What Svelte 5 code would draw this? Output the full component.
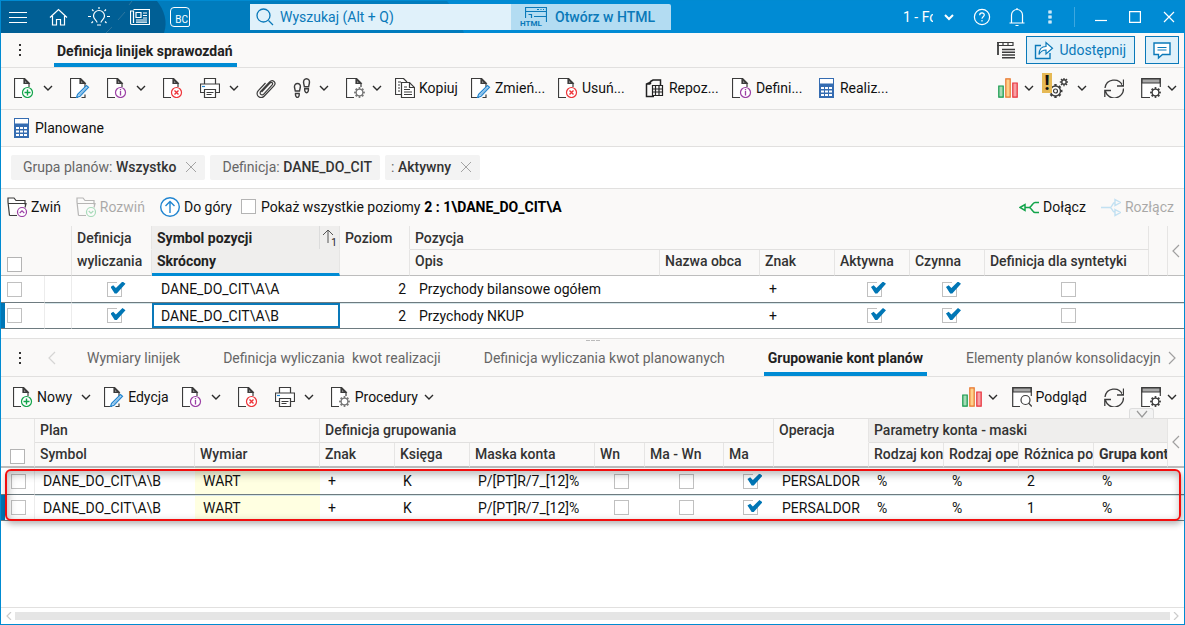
<script>
	let showAll = $state(false);
	let search = $state('');

	const toolbar = [
		{ icon: 'doc-new', title: 'Nowy', menu: true },
		{ icon: 'doc-edit', title: 'Edycja' },
		{ icon: 'doc-info', title: 'Informacje', menu: true },
		{ icon: 'doc-delete', title: 'Usuń' },
		{ icon: 'printer', title: 'Drukuj', menu: true },
		{ icon: 'clip', title: 'Załączniki' },
		{ icon: 'steps', title: 'Historia', menu: true, close: true },
		{ icon: 'doc-gear', title: 'Procedury', menu: true, tight: true },
		{ icon: 'copy', label: 'Kopiuj' },
		{ icon: 'doc-edit', label: 'Zmień...', wide: true },
		{ icon: 'doc-delete', label: 'Usuń...', wide: true },
		{ icon: 'repo', label: 'Repoz...', wide: true },
		{ icon: 'doc-info', label: 'Defini...', wide: true },
		{ icon: 'calc', label: 'Realiz...', wide: true }
	];

	const toolbarRight = [
		{ icon: 'chart', title: 'Wykresy', menu: true, close: true },
		{ icon: 'gears', title: 'Ustawienia', menu: true, badge: true },
		{ icon: 'refresh', title: 'Odśwież' },
		{ icon: 'window-gear', title: 'Widok', menu: true, close: true }
	];

	const detailToolbar = [
		{ icon: 'doc-new', label: 'Nowy', menu: true },
		{ icon: 'doc-edit', label: 'Edycja' },
		{ icon: 'doc-info', title: 'Informacje', menu: true },
		{ icon: 'doc-delete', title: 'Usuń' },
		{ icon: 'printer', title: 'Drukuj', menu: true },
		{ icon: 'doc-gear', label: 'Procedury', menu: true, close: true }
	];

	const detailToolbarRight = [
		{ icon: 'chart', title: 'Wykresy', menu: true, close: true },
		{ icon: 'preview', label: 'Podgląd' },
		{ icon: 'refresh', title: 'Odśwież' },
		{ icon: 'window-gear', title: 'Widok', menu: true, close: true }
	];

	const filters = [
		{ name: 'Grupa planów:', value: 'Wszystko', removable: true },
		{ name: 'Definicja:', value: 'DANE_DO_CIT', removable: false },
		{ name: ':', value: 'Aktywny', removable: true, short: true }
	];

	const tabs = [
		'Wymiary linijek',
		'Definicja wyliczania  kwot realizacji',
		'Definicja wyliczania kwot planowanych',
		'Grupowanie kont planów',
		'Elementy planów konsolidacyjn'
	];
	let activeTab = $state(3);

	// 0 = column takes the remaining width
	const lineCols = [44, 27, 80, 188, 70, 0, 100, 75, 75, 75, 164, 19, 16];
	const groupCols = [34, 160, 125, 75, 75, 0, 50, 79, 50, 95, 75, 75, 75, 74, 16];

	let lines = $state([
		{ symbol: 'DANE_DO_CIT\\A\\A', level: 2, desc: 'Przychody bilansowe ogółem', sign: '+', calc: true, active: true, enabled: true, synth: false, picked: false },
		{ symbol: 'DANE_DO_CIT\\A\\B', level: 2, desc: 'Przychody NKUP', sign: '+', calc: true, active: true, enabled: true, synth: false, picked: false }
	]);

	let groups = $state([
		{ symbol: 'DANE_DO_CIT\\A\\B', dim: 'WART', sign: '+', book: 'K', mask: 'P/[PT]R/7_[12]%', wn: false, mawn: false, ma: true, op: 'PERSALDOR', params: ['%', '%', '2', '%'], picked: false },
		{ symbol: 'DANE_DO_CIT\\A\\B', dim: 'WART', sign: '+', book: 'K', mask: 'P/[PT]R/7_[12]%', wn: false, mawn: false, ma: true, op: 'PERSALDOR', params: ['%', '%', '1', '%'], picked: false }
	]);
	const selected = 1;
</script>

{#snippet docBase()}
	<path d="M8 19.5H.5V.5h10L15 5v4" fill="#fff" />
	<path d="M10 .5V5.500h5z" fill="#3c3c3c" />
	<path d="M11.200 3.200v1.400h1.400z" fill="#fff" stroke="none" />
{/snippet}

{#snippet gear(cx, cy, r, color)}
	<circle {cx} {cy} r={r + 1} stroke={color} stroke-width="2" pathLength="16" stroke-dasharray="1 1" stroke-dashoffset="0.5" />
	<circle {cx} {cy} {r} fill="#fff" stroke={color} stroke-width="1.400" />
{/snippet}

{#snippet icon(name)}
	<svg class="icon" viewBox="0 0 20 20" width="20" height="20" fill="none" stroke="#3c3c3c" stroke-width="1.200" aria-hidden="true">
		{#if name === 'doc-new'}
			{@render docBase()}
			<circle cx="13.500" cy="14.500" r="5" fill="#fff" stroke="#12a44a" />
			<path d="M13.500 11.500v6M10.500 14.500h6" stroke="#12a44a" stroke-width="1.400" />
		{:else if name === 'doc-edit'}
			{@render docBase()}
			<path d="M11.500 19.500H15v-3" />
			<path d="M7.500 16.500 16.500 7.500l2 1.800-8.500 9-3.500 1.200z" fill="#d9ecfa" stroke="#2185d0" />
			<path d="m9 17.500 8-8" stroke="#2185d0" stroke-width=".8" />
		{:else if name === 'doc-info'}
			{@render docBase()}
			<circle cx="13.500" cy="14.500" r="5" fill="#fff" stroke="#9b3fa5" />
			<path d="M13.500 13v4.500M13.500 11v1.200" stroke="#9b3fa5" stroke-width="1.300" />
		{:else if name === 'doc-delete'}
			{@render docBase()}
			<circle cx="13.500" cy="14.500" r="5" fill="#fff" stroke="#ee3338" />
			<path d="m11.500 12.500 4 4m0-4-4 4" stroke="#ee3338" stroke-width="1.400" />
		{:else if name === 'doc-gear'}
			{@render docBase()}
			{@render gear(13.5, 14.5, 3.4, '#777')}
		{:else if name === 'printer'}
			<path d="M4.500 6V.5h11V6" fill="#fff" />
			<path d="M4.500 14.500h-4v-8.500h19v8.500h-4" fill="#fff" />
			<path d="M4.500 11.500h11v8h-11z" fill="#fff" />
			<path d="M6.500 14.500h7M6.500 16.500h5" stroke-width="1" />
			<path d="M2 8.500h3" stroke="#2185d0" />
		{:else if name === 'clip'}
			<path d="m5.500 14 8.500-9c1.600-1.600 3.600.4 2.200 1.900L8 15.800c-2.400 2.500-5.300-.2-3.100-2.600l8.700-9.300c3.100-3.200 7.300.8 4.300 4L8.300 18c-3.800 4-9.800-.9-6-5.300L9.500 5" />
		{:else if name === 'steps'}
			<path d="M4.500 5.500C2.500 5.500 1.200 7.200 1.500 9.500L2.300 13h4.200l.8-3.500c.4-2.300-.8-4-2.800-4zM2.500 15.500h3.700c.2 2.200-.5 4-1.800 4s-2.100-1.800-1.900-4zM13.500.7c-2 0-3.200 1.800-2.900 4.300l.8 3.700h4.200l.8-3.700c.4-2.500-.9-4.300-2.900-4.300zM11.700 10.700h3.700c.2 2.200-.5 4-1.800 4s-2.100-1.800-1.900-4z" stroke-width="1.400" />
		{:else if name === 'copy'}
			<path d="M6.500 16.500h-6V.5h8L12 4" fill="#fff" />
			<path d="M3 4h3M3 7h2M3 10h2M3 13h2" stroke-width="1" />
			<path d="M6.500 4.500h8l5 5v10h-13z" fill="#fff" />
			<path d="M14.500 4.500v5h5" />
			<path d="M9 9h3M9 11.500h6M9 14h8M9 16.500h8" stroke-width="1" />
		{:else if name === 'repo'}
			<path d="M4 18.500H1.500V6L5 4.500M5.500 6V3.500L8 2h7.500v5M1.500 6h4M9 18.500H4" stroke-width="1.500" stroke="#222" />
			<path d="M7.500 7.500h10v10h-10zM7.500 11h10M7.500 14h10M10.500 7.500v10M14 7.500v10" stroke="#222" />
		{:else if name === 'calc'}
			<path d="M0 0h15v20H0z" fill="#356cb1" stroke="none" />
			<path d="M1 1h13v4.500H1z" fill="#fff" stroke="none" />
			<path d="M2 9h3v2H2zM6 9h3v2H6zM10 9h3v2h-3zM2 12.500h3v2H2zM6 12.500h3v2H6zM10 12.500h3v2h-3zM2 16h3v2H2zM6 16h3v2H6zM10 16h3v2h-3z" fill="#fff" stroke="none" />
		{:else if name === 'chart'}
			<path d="M.8 8h4.400v11.200H.8z" fill="#a5dcb6" stroke="#12984a" />
			<path d="M7.800.8h4.400v18.400H7.800z" fill="#ffd08a" stroke="#e8762d" />
			<path d="M14.800 5h4.400v14.200h-4.400z" fill="#f8a0a4" stroke="#e8303a" />
		{:else if name === 'gears'}
			{@render gear(7.5, 13, 5, '#3c3c3c')}
			<circle cx="7.500" cy="13" r="2" />
			{@render gear(16, 4, 2.2, '#3c3c3c')}
		{:else if name === 'refresh'}
			<path d="M1 10A9.200 9.200 0 0 1 18.500 7.500M19.500 1.500v6.500H13M19.500 10.500A9.200 9.200 0 0 1 1.500 13.500M.8 19v-6.500H7" stroke-width="1.300" />
		{:else if name === 'window-gear'}
			<path d="M9 19.500H.7V.7h18.600V9" fill="#fff" />
			<path d="M1 1h18v4H1z" fill="#a9a9a9" />
			{@render gear(14.5, 14.5, 3.4, '#3c3c3c')}
		{:else if name === 'preview'}
			<path d="M8 19.500H.7V.7h18.600V9" fill="#fff" />
			<path d="M1 1h18v4H1z" fill="#a9a9a9" />
			<circle cx="13.500" cy="13" r="4.500" fill="#fff" />
			<path d="m16.500 16 3.300 3.500" />
		{:else if name === 'collapse' || name === 'expand'}
			<path d="M2.500 18.500 1 5V1h6l2 2.500h9v4M1 6.500h18l-1 4M2.500 18.500H10" fill="#fff" />
			<circle cx="15" cy="15" r="4.500" fill="#fff" stroke={name === 'collapse' ? '#9b3fa5' : '#12a44a'} />
			<path d={name === 'collapse' ? 'm12.700 16 2.300-2.200 2.300 2.200' : 'm12.700 14 2.300 2.200 2.300-2.200'} stroke={name === 'collapse' ? '#9b3fa5' : '#12a44a'} />
		{:else if name === 'up'}
			<circle cx="10" cy="10" r="9.300" fill="#fff" stroke="#2185d0" stroke-width="1.400" />
			<path d="M10 16V4.500M5.500 9 10 4.500 14.500 9" stroke="#2185d0" stroke-width="1.400" />
		{:else if name === 'attach'}
			<path d="M1 10.500 6 7.500v6zM6 10.500h4M20 5.500h-4c-2.500 0-3.500 5-6 5 2.500 0 3.500 5 6 5h4" stroke="#12a44a" stroke-width="1.500" />
		{:else if name === 'detach'}
			<path d="M0 10.500h9M14 5.500c-3 0-2.500 5-5 5 2.500 0 2 5 5 5M14 2.500 19.500 5.500 14 8.500zM14 12.500l5.500 3-5.500 3z" stroke="#5bb5e8" stroke-width="1.400" />
		{:else if name === 'layout'}
			<path d="M2 2v13" stroke-width="1.800" />
			<path d="M1 2.500h16v3H1M7 2.500v3M12 2.500v3" />
			<path d="M6 9.500h13M6 12.200h13M6 15h13M6 17.700h13" stroke-width="1.500" />
		{:else if name === 'share'}
			<path d="M7 5.500H1.500v13h14.500V13" stroke="#0a79b9" stroke-width="1.400" />
			<path d="M5 14.500c0-5 2.500-8 7-8v-4l6.500 5.700L12 14v-4c-3.500 0-5.500 1.500-7 4.500z" fill="#fff" stroke="#0a79b9" />
		{:else if name === 'comment'}
			<path d="M2 3h16v11.500h-7.500L6.500 18v-3.500H2z" fill="#fff" stroke="#0a79b9" stroke-width="1.400" />
			<path d="M5.500 7.500h9M5.500 10h9" stroke="#0a79b9" />
		{/if}
	</svg>
{/snippet}

{#snippet chevron()}
	<svg class="chev" viewBox="0 0 10 10" width="10" height="10" fill="none" stroke="#2b2b2b" stroke-width="1.400" aria-hidden="true">
		<path d="m1 3 4 4 4-4" />
	</svg>
{/snippet}

{#snippet tools(items)}
	{#each items as item}
		<button class="tool" class:labelled={item.label} class:wide={item.wide} class:tight={item.tight} class:close={item.close} class:calc={item.icon === 'calc'} title={item.title}>
			{#if item.badge}
				<span class="alert">!</span>
			{/if}
			{@render icon(item.icon)}
			{#if item.label}<span>{item.label}</span>{/if}
			{#if item.menu}{@render chevron()}{/if}
		</button>
	{/each}
{/snippet}

{#snippet dots()}
	<button class="dots" aria-label="Więcej">
		<svg viewBox="0 0 4 14" width="4" height="14" fill="currentColor" aria-hidden="true">
			<path d="M1 1h2v2H1zM1 6h2v2H1zM1 11h2v2H1z" />
		</svg>
	</button>
{/snippet}

{#snippet arrow(d, label)}
	<button class="arrow" aria-label={label}>
		<svg viewBox="0 0 8 14" width="8" height="14" fill="none" stroke="currentColor" stroke-width="1.200" aria-hidden="true"><path {d} /></svg>
	</button>
{/snippet}

<div class="window">
	<header class="titlebar">
		<svg class="decor" width="470" height="32" viewBox="0 0 470 32" aria-hidden="true">
			<path d="M0 0h446c8 10 13 22 17 32H0z" fill="#007cbd" />
			<path d="M0 0h156c7 9 11 20 7 32H0z" fill="#005f95" />
			<path d="m117 19 7-8M105 32l6-6M128 4l3-4" stroke="#2d769f" fill="none" />
		</svg>
		<nav class="quick">
			<button aria-label="Menu">
				<svg viewBox="0 0 20 20" width="20" height="20"><path d="M1 5.500h18M1 10.500h18M1 15.500h18" /></svg>
			</button>
			<button aria-label="Start">
				<svg viewBox="0 0 20 20" width="20" height="20"><path d="M2 10.500 10.500 2.500l8.500 8M4.500 9v9h4v-5.500h4V18h4V9" /></svg>
			</button>
			<button aria-label="Podpowiedzi">
				<svg viewBox="0 0 22 20" width="22" height="20"><path d="M9 15.500c0-2-3.500-3-3.500-6.500a5.500 5.500 0 0 1 11 0c0 3.500-3.500 4.500-3.500 6.500M9 18h4M11 0v2M4 2.500 5.500 4M18 2.500 16.500 4M0 9.500h3M19 9.500h3M3.500 16 5 14.500M18.500 16 17 14.500" /></svg>
			</button>
			<button aria-label="Aktualności">
				<svg viewBox="0 0 20 20" width="20" height="20"><path d="M3.500 2.500h16v15H2a1.500 1.500 0 0 1-1.500-1.500V4h3v12M6 5.500h5v5H6zM13 6h4M13 8.500h4M13 11h4M6 13h11M6 15.200h11" /></svg>
			</button>
		</nav>
		<button class="bc" aria-label="BC"><span>BC</span></button>
		<div class="search">
			<svg viewBox="0 0 18 18" width="18" height="18" fill="none" stroke="#0a79b9" stroke-width="1.300" aria-hidden="true"><circle cx="7.500" cy="7.500" r="6.500" /><path d="m12.500 12.500 4.500 4.500" /></svg>
			<input type="text" aria-label="Wyszukaj" placeholder="Wyszukaj (Alt + Q)" bind:value={search} />
		</div>
		<button class="html">
			<span class="html-icon" aria-hidden="true">
				<svg viewBox="0 0 22 16" width="22" height="16" fill="none" stroke="#0a79b9"><path d="M.5 11V.5h21V15M.5 4.500h21M3.500 7.500h3M6.500 7v4M9 9.500h12M12 2.500h2M15.500 2.500h1M18 2.500h1" stroke-width="1.200" /></svg>
				<small>HTML</small>
			</span>
			Otwórz w HTML
		</button>
		<div class="controls">
			<label class="company">
				<select aria-label="Firma"><option>1 - Fo</option></select>
				<svg viewBox="0 0 10 10" width="10" height="10"><path d="m1 3 4 4 4-4" stroke-width="2" /></svg>
			</label>
			<button aria-label="Pomoc">
				<svg viewBox="0 0 18 18" width="18" height="18"><circle cx="9" cy="9" r="7.600" /><path d="M6.700 7.200c0-3 4.600-2.900 4.600-.2 0 1.700-2.300 1.800-2.300 3.700M9 12v1.500" /></svg>
			</button>
			<button aria-label="Powiadomienia">
				<svg viewBox="0 0 18 20" width="18" height="20"><path d="M1.500 16h15M3.500 16V8a5.500 5.500 0 0 1 11 0v8M7.500 18.500h3M9 1v1.500" /></svg>
			</button>
			{@render dots()}
			<span class="sep"></span>
			<button class="win" aria-label="Minimalizuj">
				<svg viewBox="0 0 12 12" width="12" height="12"><path d="M0 9.500h12" /></svg>
			</button>
			<button class="win" aria-label="Maksymalizuj">
				<svg viewBox="0 0 12 12" width="12" height="12"><path d="M.6.6h10.800v10.800H.6z" /></svg>
			</button>
			<button class="win" aria-label="Zamknij">
				<svg viewBox="0 0 12 12" width="12" height="12"><path d="m1 1 10 10M11 1 1 11" /></svg>
			</button>
		</div>
	</header>

	<div class="bar tabs-bar">
		{@render dots()}
		<button class="main-tab">Definicja linijek sprawozdań</button>
		<div class="right share-group">
			<button class="plain" aria-label="Układ">{@render icon('layout')}</button>
			<button class="outlined">{@render icon('share')}<span>Udostępnij</span></button>
			<button class="outlined small" aria-label="Komentarze">{@render icon('comment')}</button>
		</div>
	</div>

	<div class="bar toolbar">
		{@render tools(toolbar)}
		<div class="right">{@render tools(toolbarRight)}</div>
	</div>

	<div class="bar subbar">
		<button class="tool calc">{@render icon('calc')}<span>Planowane</span></button>
	</div>

	<div class="bar filters">
		{#each filters as f}
			<div class="chip" class:short={f.short}>
				<span>{f.name} <b>{f.value}</b></span>
				{#if f.removable}
					<button aria-label="Usuń filtr">
						<svg viewBox="0 0 12 12" width="12" height="12" fill="none" stroke="#a3a3a3" aria-hidden="true"><path d="m1 1 10 10M11 1 1 11" /></svg>
					</button>
				{/if}
			</div>
		{/each}
	</div>

	<div class="levels">
		<button class="action">{@render icon('collapse')}Zwiń</button>
		<button class="action" disabled>{@render icon('expand')}Rozwiń</button>
		<button class="action">{@render icon('up')}Do góry</button>
		<label class="show-all"><input type="checkbox" bind:checked={showAll} />Pokaż wszystkie poziomy</label>
		<b>2 : 1\DANE_DO_CIT\A</b>
		<div class="right joins">
			<button class="action">{@render icon('attach')}Dołącz</button>
			<button class="action" disabled>{@render icon('detach')}Rozłącz</button>
		</div>
	</div>

	<table class="lines">
		<colgroup>
			{#each lineCols as w}<col style:width={w ? `${w}px` : 'auto'} />{/each}
		</colgroup>
		<thead>
			<tr>
				<th rowspan="2" colspan="2" class="pick"><input type="checkbox" aria-label="Zaznacz wszystkie" /></th>
				<th class="no-line">Definicja</th>
				<th class="no-line sorted">
					<div class="sort-head">Symbol pozycji
						<span class="sort">
							<svg viewBox="0 0 12 14" width="12" height="14" fill="none" stroke="#555" aria-hidden="true"><path d="M6 14V1M1 6l5-5 5 5" /></svg>
							<small>1</small>
						</span>
					</div>
				</th>
				<th class="no-line">Poziom</th>
				<th colspan="6">Pozycja</th>
				<th rowspan="2"></th>
				<th rowspan="2" class="edge">{@render arrow('M7 1 1 7l6 6', 'Rozwiń panel')}</th>
			</tr>
			<tr>
				<th>wyliczania</th>
				<th class="sorted marked">Skrócony</th>
				<th></th>
				<th>Opis</th>
				<th>Nazwa obca</th>
				<th>Znak</th>
				<th>Aktywna</th>
				<th>Czynna</th>
				<th>Definicja dla syntetyki</th>
			</tr>
		</thead>
		<tbody>
			{#each lines as row, i}
				<tr class:selected={i === selected}>
					<td class="pick ruled"><input type="checkbox" aria-label="Zaznacz" bind:checked={row.picked} /></td>
					<td class="ruled"></td>
					<td class="check"><input type="checkbox" aria-label="Definicja wyliczania" bind:checked={row.calc} /></td>
					<td class:focused={i === selected}>{row.symbol}</td>
					<td class="num">{row.level}</td>
					<td>{row.desc}</td>
					<td></td>
					<td>{row.sign}</td>
					<td class="check"><input type="checkbox" aria-label="Aktywna" bind:checked={row.active} /></td>
					<td class="check"><input type="checkbox" aria-label="Czynna" bind:checked={row.enabled} /></td>
					<td class="check"><input type="checkbox" aria-label="Definicja dla syntetyki" bind:checked={row.synth} /></td>
					<td colspan="2"></td>
				</tr>
			{/each}
		</tbody>
	</table>

	<div class="splitter"><i></i><i></i><i></i></div>

	<div class="bar detail-tabs">
		{@render dots()}
		<span class="faint">{@render arrow('M7 1 1 7l6 6', 'Poprzednie')}</span>
		<div class="tab-strip">
			{#each tabs as tab, i}
				<button class:active={i === activeTab} onclick={() => (activeTab = i)}>{tab}</button>
			{/each}
		</div>
		{@render arrow('m1 1 6 6-6 6', 'Następne')}
	</div>

	<div class="bar toolbar detail">
		{@render tools(detailToolbar)}
		<div class="right">{@render tools(detailToolbarRight)}</div>
		<button class="pull" aria-label="Rozwiń pasek">
			<svg viewBox="0 0 12 8" width="12" height="8" fill="none" stroke="#999" stroke-width="1.200" aria-hidden="true"><path d="m1 1 5 6 5-6" /></svg>
		</button>
	</div>

	<div class="groups-wrap">
		<table class="groups">
			<colgroup>
				{#each groupCols as w}<col style:width={w ? `${w}px` : 'auto'} />{/each}
			</colgroup>
			<thead>
				<tr>
					<th rowspan="2" class="pick"><input type="checkbox" aria-label="Zaznacz wszystkie" /></th>
					<th colspan="2">Plan</th>
					<th colspan="6">Definicja grupowania</th>
					<th class="no-line">Operacja</th>
					<th colspan="4" class="shaded">Parametry konta - maski</th>
					<th rowspan="2" class="edge">{@render arrow('M7 1 1 7l6 6', 'Rozwiń panel')}</th>
				</tr>
				<tr>
					<th>Symbol</th>
					<th>Wymiar</th>
					<th>Znak</th>
					<th>Księga</th>
					<th>Maska konta</th>
					<th>Wn</th>
					<th>Ma - Wn</th>
					<th>Ma</th>
					<th></th>
					<th>Rodzaj kon</th>
					<th>Rodzaj ope</th>
					<th>Różnica po</th>
					<th class="strong">Grupa kont</th>
				</tr>
			</thead>
			<tbody>
				{#each groups as row, i}
					<tr class:selected={i === selected}>
						<td class="pick ruled"><input type="checkbox" aria-label="Zaznacz" bind:checked={row.picked} /></td>
						<td>{row.symbol}</td>
						<td class="yellow">{row.dim}</td>
						<td>{row.sign}</td>
						<td>{row.book}</td>
						<td>{row.mask}</td>
						<td class="check"><input type="checkbox" aria-label="Wn" bind:checked={row.wn} /></td>
						<td class="check"><input type="checkbox" aria-label="Ma - Wn" bind:checked={row.mawn} /></td>
						<td class="check"><input type="checkbox" aria-label="Ma" bind:checked={row.ma} /></td>
						<td>{row.op}</td>
						{#each row.params as p}<td>{p}</td>{/each}
						<td></td>
					</tr>
				{/each}
			</tbody>
		</table>
		<div class="highlight"></div>
	</div>

	<div class="empty"></div>

	<div class="scroll">
		<svg viewBox="0 0 6 8" width="6" height="8"><path d="M5 0 1 4l4 4" /></svg>
		<span class="thumb"></span>
		<svg viewBox="0 0 6 8" width="6" height="8"><path d="m1 0 4 4-4 4" /></svg>
	</div>
</div>

<style>
	:global(body) {
		margin: 0;
	}

	.window {
		display: flex;
		flex-direction: column;
		box-sizing: border-box;
		min-height: 100vh;
		border: 1px solid #008bd2;
		background: #fff;
		color: #111;
		font-family: Roboto, 'Liberation Sans', sans-serif;
		font-size: 14px;
		line-height: 20px;
		overflow: hidden;
	}

	button {
		display: flex;
		align-items: center;
		padding: 0;
		border: none;
		background: none;
		color: inherit;
		font: inherit;
		white-space: nowrap;
		cursor: pointer;
	}

	svg {
		flex: none;
		display: block;
	}

	b,
	.strong {
		font-weight: 700;
	}

	.right {
		display: flex;
		align-items: center;
		margin-left: auto;
	}

	/* title bar */
	.titlebar {
		position: relative;
		display: flex;
		align-items: center;
		height: 32px;
		background: #008bd4;
		color: #fff;
	}

	.titlebar > :not(.decor) {
		position: relative;
	}

	.decor {
		position: absolute;
		top: 0;
		left: 0;
	}

	.quick {
		display: flex;
		gap: 20px;
		padding-left: 7px;
	}

	.quick svg,
	.controls svg,
	.scroll svg {
		fill: none;
		stroke: #fff;
		stroke-width: 1.2;
	}

	.bc {
		box-sizing: border-box;
		align-items: flex-end;
		justify-content: flex-end;
		width: 20px;
		height: 20px;
		margin-left: 20px;
		padding-right: 1px;
		border: 1px solid #fff;
		border-radius: 4px 4px 2px 4px;
		font-size: 10px;
		line-height: 12px;
	}

	.search {
		display: flex;
		align-items: center;
		gap: 6px;
		box-sizing: border-box;
		width: 261px;
		height: 26px;
		margin-left: 60px;
		padding: 0 5px 0 6px;
		background: #e0f1fa;
	}

	.search input {
		flex: 1;
		min-width: 0;
		padding: 0;
		border: none;
		outline: none;
		background: none;
		color: #0a79b9;
		font: inherit;
	}

	.search input::placeholder {
		color: #0a79b9;
		opacity: 1;
	}

	.html {
		box-sizing: border-box;
		gap: 8px;
		width: 160px;
		height: 26px;
		padding-left: 9px;
		border-radius: 0 2px 0 0;
		background: #b3dcf2;
		color: #0a79b9;
		font-weight: 500;
	}

	.html-icon {
		display: flex;
		flex-direction: column;
		align-items: flex-end;
		width: 27px;
		height: 20px;
	}

	.html-icon svg {
		margin-bottom: -3px;
	}

	.html-icon small {
		width: 27px;
		font-size: 8px;
		font-weight: 700;
		line-height: 8px;
		text-align: left;
	}

	.controls {
		display: flex;
		align-items: center;
		margin-left: auto;
		gap: 17px;
		padding-right: 9px;
	}

	.company {
		display: flex;
		align-items: center;
		gap: 11px;
		margin-right: 2px;
	}

	.company select {
		appearance: none;
		width: 30px;
		padding: 0;
		border: none;
		background: none;
		color: #fff;
		font: inherit;
	}

	.sep {
		width: 1px;
		height: 20px;
		background: #3da7df;
	}

	.win {
		margin-left: 5px;
	}

	.sep + .win {
		margin-left: 3px;
	}

	.dots {
		justify-content: center;
		width: 18px;
		height: 20px;
		color: #333;
	}

	.controls .dots {
		width: 14px;
		color: #fff;
	}

	/* bars */
	.bar {
		display: flex;
		align-items: center;
		border-bottom: 1px solid #e1e0df;
		background: #faf9f8;
	}

	.tabs-bar {
		height: 34px;
		padding: 0 5px 0 10px;
	}

	.main-tab {
		align-self: stretch;
		margin-left: 25px;
		padding: 6px 4px 0 3px;
		border-bottom: 4px solid #008bd4;
		font-weight: 700;
		color: #222;
	}

	.share-group {
		gap: 10px;
	}

	.outlined {
		box-sizing: border-box;
		height: 28px;
		gap: 5px;
		padding: 0 8px 0 7px;
		border: 1px solid #0a79b9;
		background: #e0f1fa;
		color: #0a79b9;
	}

	.outlined.small {
		padding: 0 6px;
	}

	.toolbar {
		position: relative;
		box-sizing: border-box;
		height: 42px;
		padding: 0 7px 2px 13px;
	}

	.detail {
		padding-left: 12px;
	}

	.tool {
		gap: 4px;
		margin-right: 17px;
	}

	.tool .chev {
		margin-left: 5px;
	}

	.tool.tight {
		margin-right: 13px;
	}

	.tool.tight .chev,
	.tool.close .chev {
		margin-left: 2px;
	}

	.tool.labelled {
		margin-right: 13px;
	}

	.tool.wide {
		box-sizing: border-box;
		width: 87px;
		margin-right: 0;
	}

	.tool.calc {
		gap: 1px;
	}

	.right .tool.close {
		margin-right: 14px;
	}

	.right .tool.labelled {
		margin-right: 17px;
	}

	.right .tool:last-child {
		margin-right: 0;
	}

	.alert {
		align-self: flex-start;
		width: 10px;
		height: 20px;
		margin: -5px -8px 0 -6px;
		background: #e6b955;
		font-size: 20px;
		font-weight: 700;
		text-align: center;
		z-index: 1;
	}

	.subbar {
		height: 36px;
		padding-left: 13px;
	}

	.filters {
		gap: 5px;
		height: 41px;
		padding-left: 10px;
		background: #fff;
	}

	.chip {
		display: flex;
		align-items: center;
		gap: 9px;
		box-sizing: border-box;
		height: 25px;
		padding: 0 8px 2px 12px;
		border-radius: 2px;
		background: #f3f3f3;
		color: #666;
	}

	.chip.short {
		padding-left: 6px;
	}

	.chip b {
		color: #333;
		font-weight: 500;
	}

	.levels {
		display: flex;
		align-items: center;
		box-sizing: border-box;
		height: 37px;
		padding: 0 10px 2px 6px;
		background: #faf9f8;
	}

	.action {
		gap: 4px;
		margin-right: 15px;
	}

	.action:disabled {
		opacity: 0.35;
		cursor: default;
	}

	.show-all {
		display: flex;
		align-items: center;
		gap: 5px;
		margin: 0 4px 0 -6px;
	}

	.levels b {
		color: #000;
		font-weight: 700;
	}

	.joins .action:last-child {
		margin-right: 0;
	}

	/* checkboxes */
	input[type='checkbox'] {
		appearance: none;
		position: relative;
		display: block;
		box-sizing: border-box;
		flex: none;
		width: 15px;
		height: 15px;
		margin: 0;
		border: 1px solid #b4b4b4;
		background: #fff;
	}

	tbody input[type='checkbox'] {
		border-color: #c0c0c0;
	}

	input[type='checkbox']:checked::before {
		content: '';
		position: absolute;
		top: -1px;
		right: -1px;
		width: 5px;
		height: 6px;
		background: #fff;
	}

	input[type='checkbox']:checked::after {
		content: '';
		position: absolute;
		top: -1px;
		left: 3px;
		width: 15px;
		height: 12px;
		background: #0076b5;
		clip-path: polygon(0 45%, 18% 32%, 36% 55%, 80% 0, 100% 18%, 42% 100%, 28% 100%);
	}

	/* grids */
	table {
		width: 100%;
		border-collapse: separate;
		border-spacing: 0;
		table-layout: fixed;
	}

	th {
		box-sizing: border-box;
		height: 24px;
		padding: 0 0 0 5px;
		border-right: 1px solid #e6e5e4;
		border-bottom: 1px solid #e1e0df;
		background: #faf9f8;
		color: #333;
		font-weight: 500;
		text-align: left;
		white-space: nowrap;
		overflow: hidden;
	}

	th.strong {
		font-weight: 700;
	}

	thead tr:last-child th,
	th[rowspan] {
		border-bottom-color: #bdbdbd;
	}

	.lines thead tr:last-child th {
		height: 26px;
		padding-bottom: 4px;
	}

	.lines th.no-line,
	.groups th.no-line {
		border-bottom-color: transparent;
	}

	.groups thead tr:first-child th {
		padding-bottom: 2px;
	}

	.groups thead tr:last-child th {
		height: 25px;
		padding-bottom: 1px;
	}

	.groups thead tr:last-child th,
	.groups th[rowspan] {
		border-bottom-width: 2px;
	}

	th.sorted {
		background: #efeeed;
	}

	.lines thead tr:last-child th.marked {
		padding-bottom: 1px;
		border-bottom: 3px solid #008bd4;
	}

	.sort-head {
		display: flex;
		justify-content: space-between;
		align-items: center;
		color: #222;
		font-weight: 700;
	}

	th.marked {
		color: #222;
		font-weight: 700;
	}

	.sort {
		display: flex;
		align-items: flex-end;
		justify-content: center;
		width: 19px;
		height: 23px;
		border-left: 1px solid #dcdcdc;
		font-weight: 400;
	}

	.sort svg {
		margin: 0 -3px 6px 0;
	}

	.sort small {
		font-size: 10px;
		line-height: 12px;
	}

	th.shaded {
		background: #efeeed;
	}

	th.pick {
		padding: 0 0 3px 6px;
		vertical-align: bottom;
	}

	.groups th.pick {
		padding: 0 0 1px 9px;
	}

	th.edge {
		padding: 0 0 0 4px;
		border-right: none;
		vertical-align: middle;
	}

	.arrow {
		color: #a0a0a0;
	}

	td {
		box-sizing: border-box;
		height: 26px;
		padding: 0 0 0 9px;
		white-space: nowrap;
		overflow: hidden;
	}

	.groups td {
		padding-left: 8px;
	}

	td.ruled {
		border-right: 1px solid #ececec;
	}

	tr.selected td {
		height: 27px;
		border-top: 1px solid #6e7b80;
		border-bottom: 1px solid #6e7b80;
		box-shadow: inset 0 1px #d6e6ea;
	}

	tr td.pick {
		padding-left: 6px;
	}

	.groups tr td.pick {
		padding-left: 10px;
	}

	tr.selected td.pick {
		box-shadow: inset 4px 0 #0076b5;
	}

	tr.selected td.focused {
		padding-top: 0;
		box-shadow: inset 0 0 0 2px #0a79b9;
	}

	td.num {
		padding: 0 4px 0 0;
		text-align: right;
	}

	.groups td.check,
	td.check {
		padding: 0 0 0 4px;
		overflow: visible;
	}

	td.check input {
		margin: 0 auto;
	}

	td.yellow {
		background: #ffffe1;
	}

	.splitter {
		display: flex;
		justify-content: center;
		align-items: flex-end;
		gap: 1px;
		height: 9px;
		border-bottom: 1px solid #e1e0df;
	}

	.splitter i {
		width: 4px;
		height: 1px;
		margin-bottom: -3px;
		background: #bbb;
		z-index: 1;
	}

	/* detail section */
	.detail-tabs {
		height: 37px;
		padding: 0 8px 0 10px;
	}

	.faint {
		margin-left: 19px;
		opacity: 0.4;
	}

	.tab-strip {
		display: flex;
		flex: 1;
		align-self: stretch;
		gap: 35px;
		min-width: 0;
		margin: 0 4px 0 27px;
		overflow: hidden;
	}

	.tab-strip button {
		padding: 4px 4px 0;
		border-bottom: 4px solid transparent;
		color: #666;
		white-space: pre;
	}

	.tab-strip button.active {
		border-bottom-color: #008bd4;
		color: #222;
		font-weight: 700;
	}

	.pull {
		position: absolute;
		right: 30px;
		bottom: 0;
		justify-content: center;
		width: 25px;
		height: 10px;
		border: 1px solid #ddd;
		border-bottom: none;
		border-radius: 3px 3px 0 0;
		box-sizing: border-box;
		background: #f3f3f3;
	}

	.groups-wrap {
		position: relative;
	}

	/* frame around the rows that take part in grouping */
	.highlight {
		position: absolute;
		left: 4px;
		right: 3px;
		bottom: 0;
		box-sizing: border-box;
		height: 52px;
		border: 2px solid #f20d0d;
		border-radius: 6px;
		box-shadow: 1px 3px 6px rgba(0, 0, 0, 0.3), inset 1px 3px 8px rgba(0, 0, 0, 0.3);
		pointer-events: none;
	}

	.empty {
		flex: 1;
	}

	.scroll {
		display: flex;
		align-items: center;
		gap: 3px;
		height: 16px;
		padding: 0 5px;
		border-top: 1px solid #e1e0df;
	}

	.scroll svg {
		stroke: #ccc;
	}

	.thumb {
		flex: 1;
		height: 8px;
		background: #e5e5e5;
	}
</style>
